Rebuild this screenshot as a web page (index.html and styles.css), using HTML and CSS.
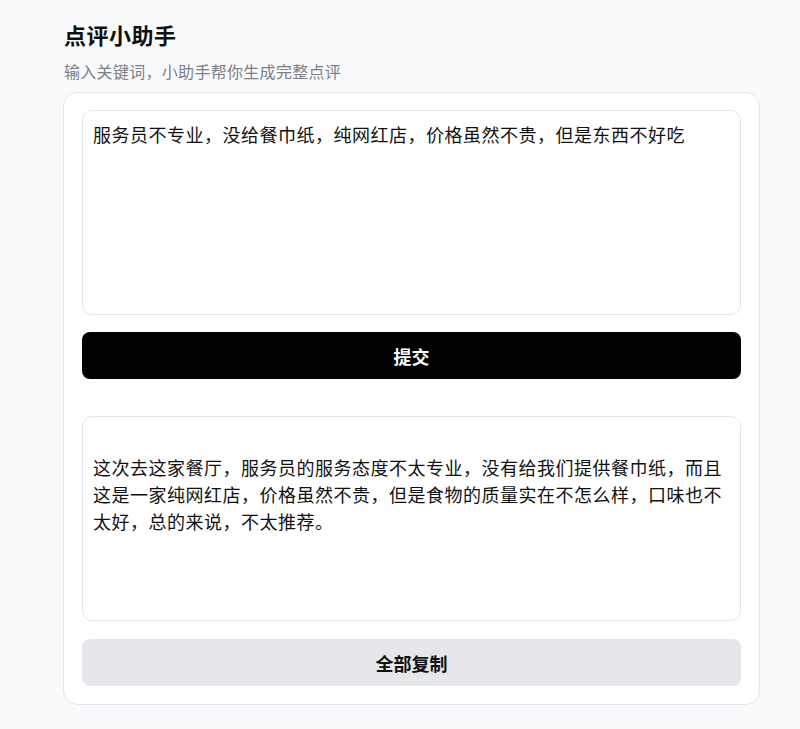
FILE: index.html
```html
<!DOCTYPE html>
<html lang="zh-CN">
<head>
<meta charset="utf-8">
<title>点评小助手</title>
<link rel="stylesheet" href="styles.css">
</head>
<body>
<div class="page">
  <header class="header">
    <h1 class="title">点评小助手</h1>
    <p class="subtitle">输入关键词，小助手帮你生成完整点评</p>
  </header>
  <main class="card">
    <textarea class="box input">服务员不专业，没给餐巾纸，纯网红店，价格虽然不贵，但是东西不好吃</textarea>
    <button class="btn btn-primary">提交</button>
    <div class="box output">
<br>这次去这家餐厅，服务员的服务态度不太专业，没有给我们提供餐巾纸，而且这是一家纯网红店，价格虽然不贵，但是食物的质量实在不怎么样，口味也不太好，总的来说，不太推荐。</div>
    <button class="btn btn-secondary">全部复制</button>
  </main>
</div>
</body>
</html>
```

FILE: styles.css
```css
* { box-sizing: border-box; }
html, body {
  margin: 0;
  padding: 0;
  background: #f9fafb;
  font-family: "Noto Sans CJK SC", "Noto Sans", "Liberation Sans", sans-serif;
  color: #111;
}
.page {
  width: 760px;
  padding: 18px 0 20px 63px;
}
.header { padding-left: 1px; }
.title {
  margin: 0;
  font-size: 22px;
  line-height: 33px;
  font-weight: 700;
  letter-spacing: 0.5px;
  color: #111;
}
.subtitle {
  margin: 8px 0 0;
  font-size: 16px;
  line-height: 24px;
  letter-spacing: 0.3px;
  color: #7a7f88;
}
.card {
  margin-top: 9px;
  width: 697px;
  background: #fff;
  border: 1px solid #e5e7eb;
  border-radius: 14px;
  padding: 17px 18px 18px;
  display: flex;
  flex-direction: column;
}
.box {
  display: block;
  width: 100%;
  height: 205px;
  border: 1px solid #e5e7eb;
  border-radius: 10px;
  padding: 10px;
  font-family: inherit;
  font-size: 18px;
  line-height: 27px;
  letter-spacing: 0.5px;
  color: #111;
  background: #fff;
  resize: none;
  outline: none;
  margin: 0;
}
.output {
  margin-top: 37px;
  white-space: normal;
}
.btn {
  display: block;
  width: 100%;
  height: 47px;
  border: none;
  border-radius: 8px;
  font-family: inherit;
  font-size: 18px;
  font-weight: 700;
  cursor: pointer;
}
.btn-primary {
  margin-top: 17px;
  background: #000;
  color: #fff;
}
.btn-secondary {
  margin-top: 18px;
  background: #e5e7eb;
  color: #111;
}
```
